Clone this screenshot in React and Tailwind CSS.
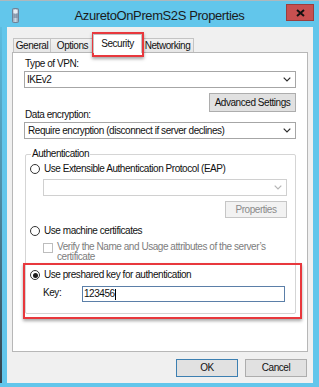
import React from "react";

const Chevron = ({ c = "#2b2b2b" }) => (
  <svg width="8" height="5" viewBox="0 0 8 5" className="shrink-0">
    <path d="M0.7 0.7 L4 4 L7.3 0.7" fill="none" stroke={c} strokeWidth="1.2" />
  </svg>
);

const Radio = ({ checked }) => (
  <div className="w-[10px] h-[10px] rounded-full border border-[#333] bg-white flex items-center justify-center shrink-0">
    {checked && <div className="w-[5px] h-[5px] rounded-full bg-[#1a1a1a]" />}
  </div>
);

export default function App() {
  return (
    <div className="relative w-[319px] h-[387px] overflow-hidden bg-[#62c6eb] flex flex-col font-['Liberation_Sans',Arial,sans-serif] text-[10px] tracking-[-0.45px] text-[#111] leading-[12px]">
      {/* top line */}
      <div className="h-px bg-[#aeb8bd]" />
      {/* title bar */}
      <div className="h-[26px] grid grid-cols-[1fr_auto_1fr] items-start">
        <div className="pl-[12px] pt-[7px]">
          <svg width="7" height="15" viewBox="0 0 7 15">
            <defs>
              <linearGradient id="ic" x1="0" y1="0" x2="1" y2="0">
                <stop offset="0" stopColor="#8ea3b8" />
                <stop offset="0.5" stopColor="#c9d6e2" />
                <stop offset="1" stopColor="#7f95ab" />
              </linearGradient>
            </defs>
            <rect x="0.5" y="0.5" width="6" height="14" rx="1" fill="url(#ic)" stroke="#6f8297" />
            <rect x="1.5" y="2" width="4" height="3" fill="#e8eef4" />
            <line x1="1.5" y1="7" x2="5.5" y2="7" stroke="#5f7389" />
            <line x1="1.5" y1="9" x2="5.5" y2="9" stroke="#5f7389" />
          </svg>
        </div>
        <div className="pt-[7px] text-[13px] leading-[16px] tracking-[-0.4px] text-[#1b1b1b]">
          AzuretoOnPremS2S Properties
        </div>
        <div className="flex justify-end pr-[5px] pt-[3px]">
          <div className="w-[28px] h-[17px] bg-[#c75050] border border-[#9b3d3d] flex items-center justify-center">
            <svg width="9" height="8" viewBox="0 0 9 8">
              <path d="M1 1 L8 7 M8 1 L1 7" stroke="#111" strokeWidth="2" />
            </svg>
          </div>
        </div>
      </div>

      {/* body */}
      <div className="flex-1 flex">
        <div className="w-[7px] flex">
          <div className="w-[2px] bg-[linear-gradient(to_bottom,#5cbde0_0%,#4f8fa8_45%,#34424b_100%)]" />
          <div className="flex-1" />
        </div>
        {/* client */}
        <div className="w-[306px] bg-[#f0f0f0] flex flex-col px-[5px] pt-[7px]">
          {/* tabs */}
          <div className="h-[18px] flex items-end pl-[1px]">
            <div className="w-[38px] h-[14px] border border-b-0 border-[#c4c4c4] bg-[linear-gradient(#f2f2f2,#e6e6e6)] flex items-center justify-center leading-[12px]">
              General
            </div>
            <div className="w-[44px] h-[14px] border border-l-0 border-b-0 border-[#c4c4c4] bg-[linear-gradient(#f2f2f2,#e6e6e6)] flex items-center justify-center leading-[12px]">
              Options
            </div>
            <div className="relative z-10 -ml-[2px] -mr-[2px] -mb-px w-[49px] h-[19px] border border-b-0 border-[#c4c4c4] bg-white flex items-start justify-center pt-[3px] leading-[12px]">
              Security
            </div>
            <div className="w-[54px] h-[14px] border border-l-0 border-b-0 border-[#c4c4c4] bg-[linear-gradient(#f2f2f2,#e6e6e6)] flex items-center justify-center leading-[12px] pl-[2px]">
              Networking
            </div>
          </div>

          {/* panel */}
          <div className="h-[300px] border border-[#b7b7b7] bg-white px-[11px] flex flex-col">
            <div className="mt-[5px] h-[12px] pl-[1px]">Type of VPN:</div>
            <div className="mt-px h-[17px] border border-[#a6a6a6] bg-white flex items-center pl-[2px] pr-[4px]">
              <span className="flex-1">IKEv2</span>
              <Chevron />
            </div>
            <div className="mt-[5px] self-end w-[87px] h-[19px] border border-[#adadad] bg-[#e1e1e1] flex items-center justify-center">
              Advanced Settings
            </div>
            <div className="-mt-[3px] h-[12px] pl-px">Data encryption:</div>
            <div className="mt-px h-[17px] border border-[#a6a6a6] bg-white flex items-center pl-[3px] pr-[4px]">
              <span className="flex-1">Require encryption (disconnect if server declines)</span>
              <Chevron />
            </div>

            {/* group box */}
            <div className="mt-[15px] ml-px w-[271px] border border-[#d5d5d5] rounded-[2px] flex flex-col pb-[11px]">
              <div className="-mt-[7px] ml-[5px] self-start px-px bg-white h-[12px]">Authentication</div>
              <div className="mt-[3px] ml-[4px] h-[12px] flex items-center gap-[4px]">
                <Radio />
                <span>Use Extensible Authentication Protocol (EAP)</span>
              </div>
              <div className="mt-[4px] ml-[17px] w-[244px] h-[17px] border border-[#d0d0d0] bg-white flex items-center justify-end pr-[4px]">
                <Chevron c="#b5b5b5" />
              </div>
              <div className="mt-[5px] ml-[199px] w-[62px] h-[17px] border border-[#c6c6c6] bg-[#f2f2f2] text-[#8a8a8a] flex items-center justify-center">
                Properties
              </div>
              <div className="mt-[7px] ml-[4px] h-[12px] flex items-center gap-[4px]">
                <Radio />
                <span>Use machine certificates</span>
              </div>
              <div className="mt-[5px] ml-[17px] flex items-start gap-[4px]">
                <div className="mt-px w-[10px] h-[10px] border border-[#bdbdbd] bg-white shrink-0" />
                <div className="text-[#7d7d7d] leading-[10px]">
                  Verify the Name and Usage attributes of the server’s
                  <br />
                  certificate
                </div>
              </div>
              <div className="mt-[7px] ml-[4px] h-[12px] flex items-center gap-[4px]">
                <Radio checked />
                <span>Use preshared key for authentication</span>
              </div>
              <div className="mt-[5px] ml-[17px] h-[16px] flex items-start">
                <div className="w-[39px] mt-[1px]">Key:</div>
                <div className="w-[203px] h-[16px] border border-[#5b7fa8] bg-white flex items-center pl-px">
                  <span>123456</span>
                  <span className="w-px h-[11px] bg-black" />
                </div>
              </div>
            </div>
          </div>

          {/* buttons */}
          <div className="mt-[7px] h-[18px] flex justify-end gap-[7px] pr-px">
            <div className="w-[62px] h-[18px] border border-[#3c7fb1] bg-[#e1e1e1] flex items-center justify-center">OK</div>
            <div className="w-[62px] h-[18px] border border-[#adadad] bg-[#e1e1e1] flex items-center justify-center">Cancel</div>
          </div>
        </div>
        <div className="flex-1" />
      </div>
      <div className="h-[4px]" />

      {/* annotation boxes */}
      <div className="absolute left-[92px] top-[32px] w-[52px] h-[25px] border-2 border-[#e8383d] shadow-[0_2px_3px_rgba(0,0,0,0.35)]" />
      <div className="absolute left-[23px] top-[263px] w-[279px] h-[56px] border-2 border-[#e8383d] shadow-[0_2px_3px_rgba(0,0,0,0.35)]" />
    </div>
  );
}
